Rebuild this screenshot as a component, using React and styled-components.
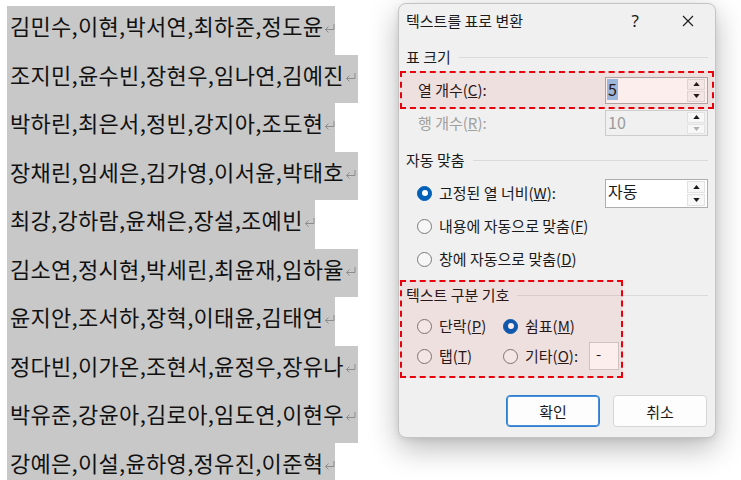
import styled, { createGlobalStyle } from "styled-components";

const GlobalStyle = createGlobalStyle`
    html, body {
        margin: 0;
        padding: 0;
        background: #ffffff;
        overflow: hidden;
    }
    * {
        box-sizing: border-box;
    }
`;

const FONT = `"Noto Sans CJK KR", "Noto Sans", sans-serif`;

const names = [
    { text: "김민수,이현,박서연,최하준,정도윤", w: 328 },
    { text: "조지민,윤수빈,장현우,임나연,김예진", w: 351 },
    { text: "박하린,최은서,정빈,강지아,조도현", w: 328 },
    { text: "장채린,임세은,김가영,이서윤,박태호", w: 351 },
    { text: "최강,강하람,윤채은,장설,조예빈", w: 308 },
    { text: "김소연,정시현,박세린,최윤재,임하율", w: 351 },
    { text: "윤지안,조서하,장혁,이태윤,김태연", w: 328 },
    { text: "정다빈,이가온,조현서,윤정우,장유나", w: 351 },
    { text: "박유준,강윤아,김로아,임도연,이현우", w: 351 },
    { text: "강예은,이설,윤하영,정유진,이준혁", w: 328 },
];

function ParaMark() {
    return (
        <MarkSvg width="11" height="10" viewBox="0 0 11 10">
            <path d="M10 1 V6.5 H1.5 M4.5 3.5 L1.5 6.5 L4.5 9.5" fill="none" stroke="#8c8c8c" strokeWidth="1" />
        </MarkSvg>
    );
}

function Spinner({ disabledDown }) {
    return (
        <SpinBox>
            <SpinButton>
                <Arrow viewBox="0 0 8 5" width="7" height="4"><path d="M0 5 L4 0 L8 5 Z" fill="#1a1a1a" /></Arrow>
            </SpinButton>
            <SpinButton>
                <Arrow viewBox="0 0 8 5" width="7" height="4"><path d="M0 0 L4 5 L8 0 Z" fill={disabledDown ? "#b0b0b0" : "#1a1a1a"} /></Arrow>
            </SpinButton>
        </SpinBox>
    );
}

function Radio({ checked, children }) {
    return (
        <RadioLabel>
            <RadioDot $checked={checked} />
            <span>{children}</span>
        </RadioLabel>
    );
}

export default function App() {
    return (
        <>
            <GlobalStyle />
            <Page>
                <Document>
                    {names.map((line, i) => (
                        <Line key={i} $w={line.w}>
                            {line.text}
                            <ParaMark />
                        </Line>
                    ))}
                </Document>

                <Dialog>
                    <TitleBar>
                        <Title>텍스트를 표로 변환</Title>
                        <TitleButtons>
                            <Help>?</Help>
                            <svg width="12" height="12" viewBox="0 0 12 12">
                                <path d="M1 1 L11 11 M11 1 L1 11" stroke="#1a1a1a" strokeWidth="1.1" />
                            </svg>
                        </TitleButtons>
                    </TitleBar>

                    <Body>
                        <GroupHeader $mt={10}>표 크기</GroupHeader>
                        <FieldRow $mt={8}>
                            <FieldLabel>열 개수(<u>C</u>):</FieldLabel>
                            <NumberBox $h={27}>
                                <Selected>5</Selected>
                                <Spinner />
                            </NumberBox>
                        </FieldRow>
                        <FieldRow $mt={3}>
                            <FieldLabel $disabled>행 개수(<u>R</u>):</FieldLabel>
                            <NumberBox $h={26} $disabled>
                                <span>10</span>
                                <Spinner disabledDown />
                            </NumberBox>
                        </FieldRow>

                        <GroupHeader $mt={12}>자동 맞춤</GroupHeader>
                        <RadioRow $mt={8}>
                            <Radio checked>고정된 열 너비(<u>W</u>):</Radio>
                            <NumberBox $h={29}>
                                <span>자동</span>
                                <Spinner />
                            </NumberBox>
                        </RadioRow>
                        <RadioRow $mt={3}>
                            <Radio>내용에 자동으로 맞춤(<u>F</u>)</Radio>
                        </RadioRow>
                        <RadioRow $mt={3}>
                            <Radio>창에 자동으로 맞춤(<u>D</u>)</Radio>
                        </RadioRow>

                        <GroupHeader $mt={11}>텍스트 구분 기호</GroupHeader>
                        <SeparatorGrid>
                            <Radio>단락(<u>P</u>)</Radio>
                            <Radio checked>쉼표(<u>M</u>)</Radio>
                            <Radio>탭(<u>T</u>)</Radio>
                            <OtherCell>
                                <Radio>기타(<u>O</u>):</Radio>
                                <OtherInput>-</OtherInput>
                            </OtherCell>
                        </SeparatorGrid>

                        <ButtonRow>
                            <Button $primary>확인</Button>
                            <Button>취소</Button>
                        </ButtonRow>
                    </Body>

                    <Annotation $left={1} $top={67} $w={314} $h={38} />
                    <Annotation $left={1} $top={276} $w={223} $h={98} />
                </Dialog>
            </Page>
        </>
    );
}

const Page = styled.div`
    position: relative;
    width: 741px;
    height: 480px;
    overflow: hidden;
    background: #ffffff;
    font-family: ${FONT};
`;

const Document = styled.div`
    padding: 6px 0 0 7px;
    display: flex;
    flex-direction: column;
`;

const Line = styled.div`
    width: ${p => p.$w}px;
    height: 48.5px;
    flex-shrink: 0;
    background: #c8c8c8;
    padding-left: 3px;
    font-size: 22px;
    letter-spacing: 0.3px;
    line-height: 38px;
    color: #111111;
    white-space: nowrap;
`;

const MarkSvg = styled.svg`
    margin-left: 1px;
    vertical-align: 2px;
`;

const Dialog = styled.div`
    position: absolute;
    left: 398px;
    top: 3px;
    width: 318px;
    height: 435px;
    background: #f0f0f0;
    border: 1px solid #c4c4c4;
    border-radius: 8px;
    box-shadow: 0 10px 30px rgba(0, 0, 0, 0.28), 0 2px 6px rgba(0, 0, 0, 0.08);
    font-size: 15px;
    color: #1a1a1a;
`;

const TitleBar = styled.div`
    height: 33px;
    display: flex;
    align-items: center;
    justify-content: space-between;
    padding: 0 21px 0 7px;
`;

const Title = styled.div`
    font-size: 15px;
    line-height: 20px;
`;

const TitleButtons = styled.div`
    display: flex;
    align-items: center;
    gap: 43px;
`;

const Help = styled.span`
    font-family: "Noto Sans", sans-serif;
    font-size: 17px;
    line-height: 20px;
`;

const Body = styled.div`
    padding: 0 7px;
    display: flex;
    flex-direction: column;
`;

const GroupHeader = styled.div`
    margin-top: ${p => p.$mt}px;
    height: 20px;
    line-height: 20px;
    display: flex;
    align-items: center;
    gap: 8px;

    &::after {
        content: "";
        flex: 1;
        height: 1px;
        background: #dadada;
    }
`;

const FieldRow = styled.div`
    margin-top: ${p => p.$mt}px;
    height: 30px;
    display: flex;
    align-items: center;
    justify-content: space-between;
    padding-left: 12px;
`;

const FieldLabel = styled.span`
    line-height: 20px;
    color: ${p => (p.$disabled ? "#a0a0a0" : "#1a1a1a")};
`;

const NumberBox = styled.div`
    width: 103px;
    height: ${p => p.$h}px;
    display: flex;
    align-items: center;
    justify-content: space-between;
    padding: 1px 2px 1px 1px;
    background: ${p => (p.$disabled ? "#f0f0f0" : "#ffffff")};
    border: 1px solid ${p => (p.$disabled ? "#cccccc" : "#adadad")};
    color: ${p => (p.$disabled ? "#9a9a9a" : "#1a1a1a")};
    font-size: 16px;
    line-height: 21px;

    & > span:first-child {
        align-self: flex-start;
        padding-left: 1px;
    }
`;

const Selected = styled.span`
    background: #99c4ec;
    padding: 0 1px;
`;

const SpinBox = styled.div`
    width: 18px;
    height: 100%;
    display: flex;
    flex-direction: column;
    gap: 1px;
`;

const SpinButton = styled.div`
    flex: 1;
    display: flex;
    align-items: center;
    justify-content: center;
    background: #f7f7f7;
    border: 1px solid #e2e2e2;
`;

const Arrow = styled.svg`
    display: block;
`;

const RadioRow = styled.div`
    margin-top: ${p => p.$mt}px;
    height: 30px;
    display: flex;
    align-items: center;
    justify-content: space-between;
    padding-left: 11px;
`;

const RadioLabel = styled.label`
    display: inline-flex;
    align-items: center;
    gap: 7px;
    line-height: 20px;
    white-space: nowrap;
`;

const RadioDot = styled.span`
    width: 15px;
    height: 15px;
    border-radius: 50%;
    flex-shrink: 0;
    background: ${p => (p.$checked ? "#005fb8" : "#f7f7f7")};
    border: 1px solid ${p => (p.$checked ? "#005fb8" : "#7a7a7a")};
    display: flex;
    align-items: center;
    justify-content: center;

    &::after {
        content: "";
        display: ${p => (p.$checked ? "block" : "none")};
        width: 6px;
        height: 6px;
        border-radius: 50%;
        background: #ffffff;
    }
`;

const SeparatorGrid = styled.div`
    margin-top: 7px;
    display: grid;
    grid-template-columns: 86px auto;
    grid-auto-rows: 28px;
    row-gap: 2px;
    align-items: center;
    padding-left: 11px;
`;

const OtherCell = styled.div`
    display: flex;
    align-items: center;
    gap: 11px;
`;

const OtherInput = styled.div`
    width: 30px;
    height: 28px;
    background: #ffffff;
    border: 1px solid #cfcfcf;
    padding: 2px 0 0 6px;
    line-height: 18px;
`;

const ButtonRow = styled.div`
    margin-top: 25px;
    display: flex;
    justify-content: flex-end;
    gap: 13px;
    padding-right: 1px;
`;

const Button = styled.button`
    width: 94px;
    height: 32px;
    font-family: ${FONT};
    font-size: 15px;
    color: #1a1a1a;
    background: #fdfdfd;
    border: 1px solid ${p => (p.$primary ? "#2f7fd0" : "#d6d6d6")};
    border-radius: 4px;
    box-shadow: ${p => (p.$primary ? "inset 0 0 0 1px #4a90d9" : "none")};
    padding: 0;
`;

const Annotation = styled.div`
    position: absolute;
    left: ${p => p.$left}px;
    top: ${p => p.$top}px;
    width: ${p => p.$w}px;
    height: ${p => p.$h}px;
    border: 2px dashed #e8000b;
    background: rgba(225, 0, 0, 0.065);
    pointer-events: none;
`;
